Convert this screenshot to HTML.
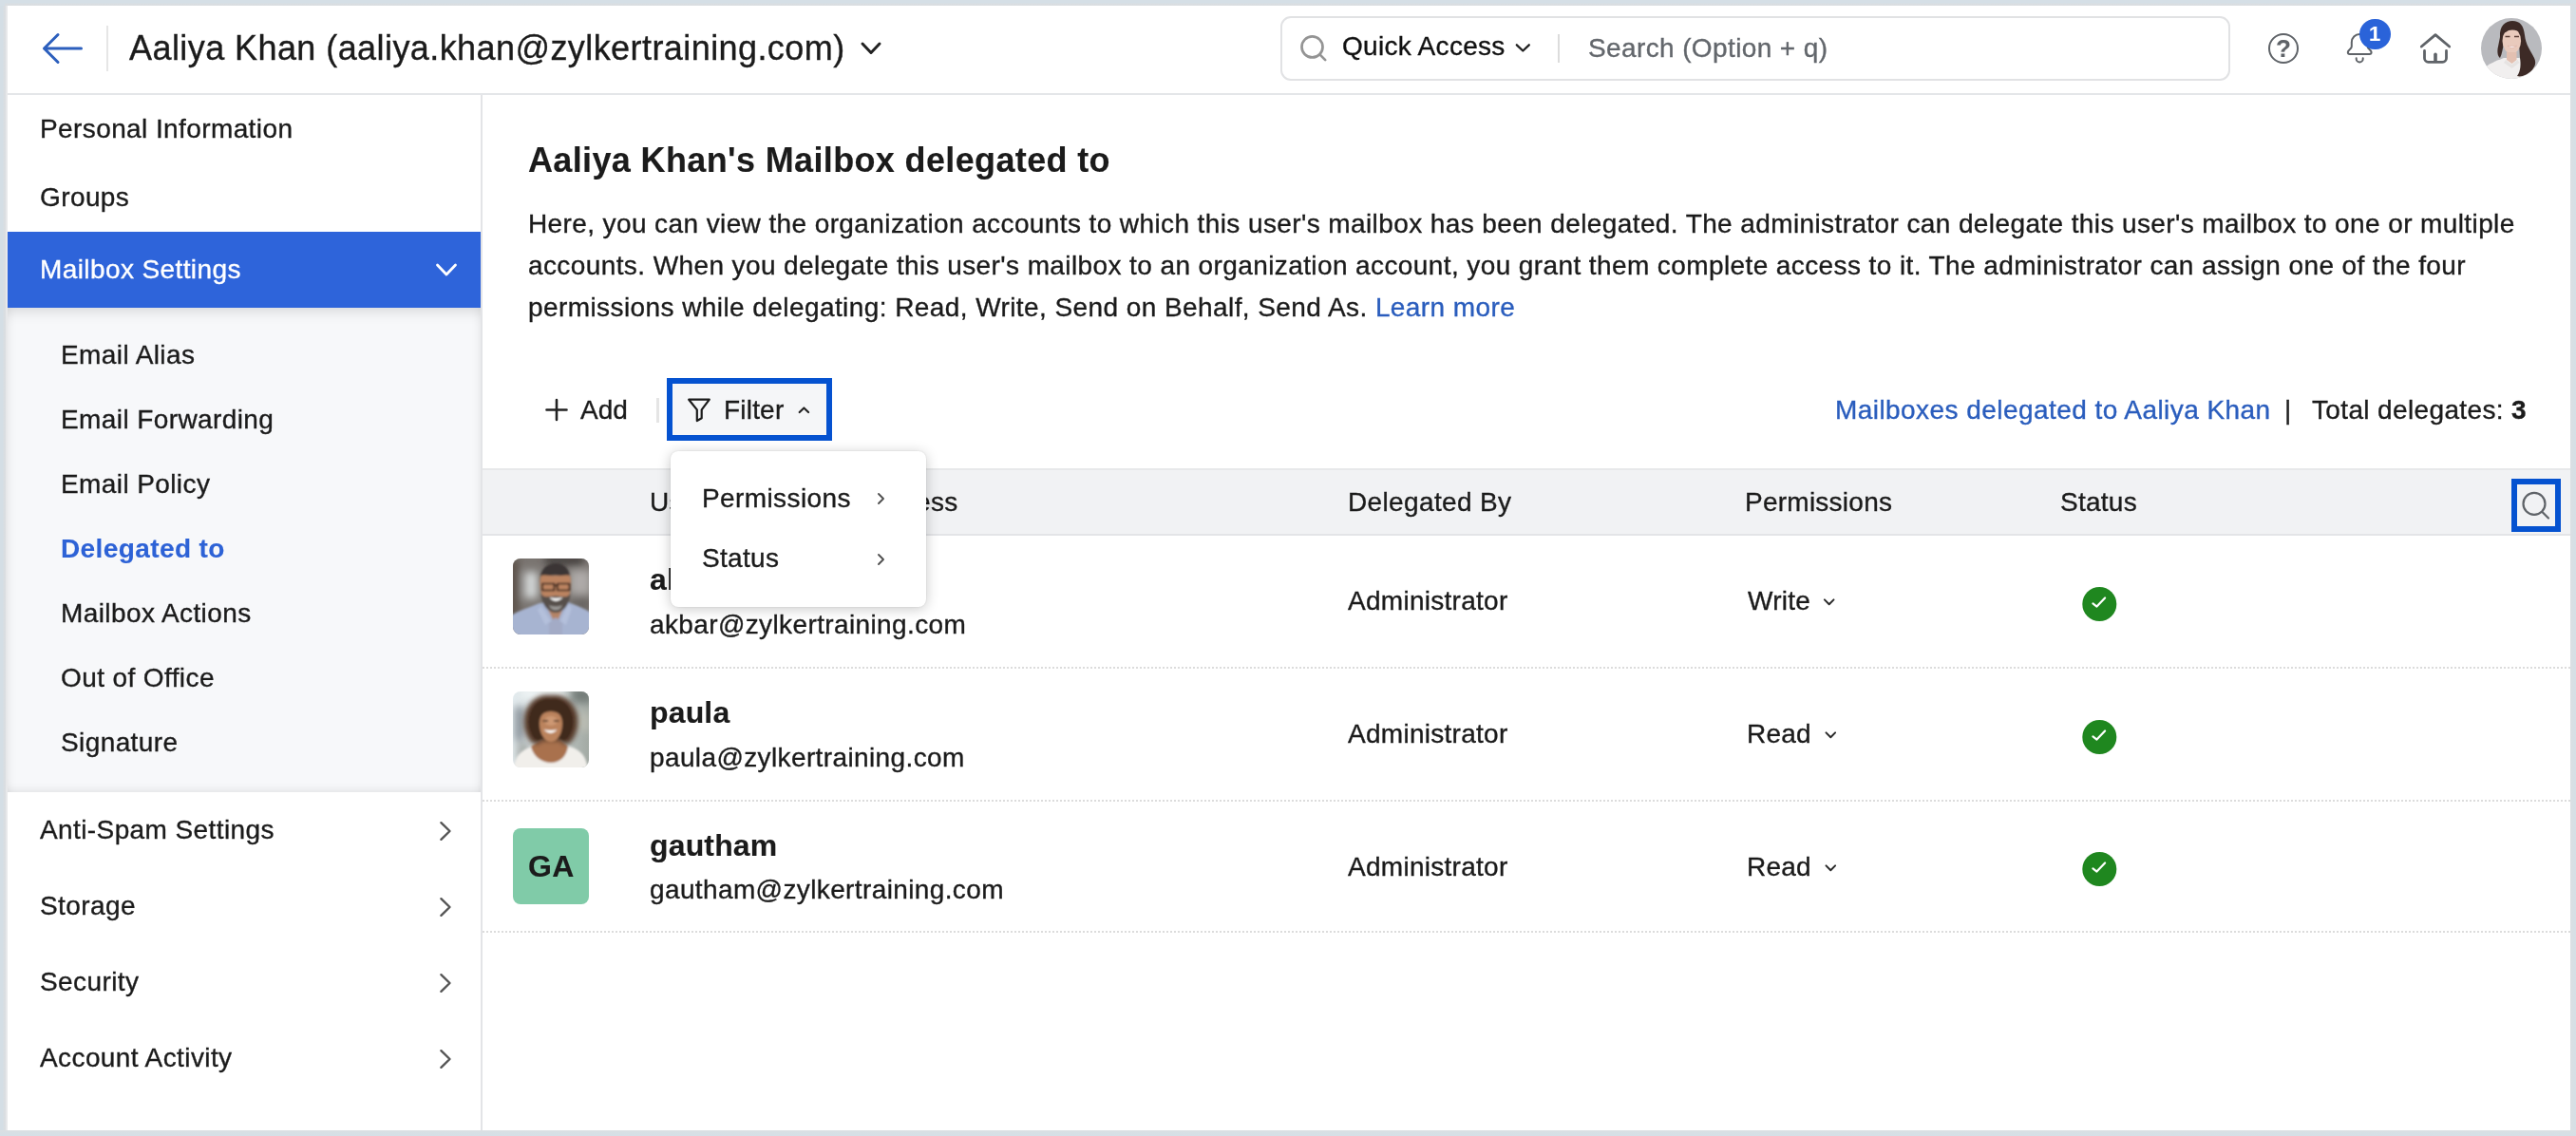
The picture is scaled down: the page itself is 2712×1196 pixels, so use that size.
<!DOCTYPE html>
<html lang="en"><head><meta charset="utf-8"><title>Mailbox delegated to</title>
<style>
html,body{margin:0;padding:0}
body{width:2712px;height:1196px;position:relative;overflow:hidden;background:#fff;font-family:"Liberation Sans",Arial,Helvetica,sans-serif;color:#1b1b1b}
.b{position:absolute;display:block;box-sizing:border-box}
.t{will-change:transform;position:absolute;white-space:nowrap;line-height:1;margin:0;padding:0;-webkit-text-stroke:0.35px currentColor}
svg{overflow:visible}

</style></head>
<body>
<div class="b" style="left:8px;top:6px;width:2698px;height:92px;background:#fff"></div>
<div class="b" style="left:8px;top:98px;width:2698px;height:2px;background:#e4e6e9"></div>
<svg class="b" style="left:40px;top:30px;" width="52" height="42" viewBox="40 30 52 42" fill="none" stroke-linecap="round" stroke-linejoin="round"><path d="M85.500 51H46.5M61 36.5L46.5 51L61 65.5" stroke="#2c5fbd" stroke-width="3"/></svg>
<div class="b" style="left:112px;top:27px;width:2px;height:48px;background:#e6e6e6"></div>
<div class="t" style="left:136.30px;top:33.00px;font-size:36px;font-weight:400;color:#1b1b1b;letter-spacing:0.425px;">Aaliya Khan (aaliya.khan@zylkertraining.com)</div>
<svg class="b" style="left:900px;top:40px;" width="34" height="24" viewBox="900 40 34 24" fill="none" stroke-linecap="round" stroke-linejoin="round"><path d="M908 46L917 55.5L926 46" stroke="#222" stroke-width="3"/></svg>
<div class="b" style="left:1348px;top:17px;width:1000px;height:68px;border:2px solid #e1e2e4;border-radius:11px;background:#fff"></div>
<svg class="b" style="left:1365px;top:35px;" width="36" height="34" viewBox="1365 35 36 34" fill="none" stroke-linecap="round" stroke-linejoin="round"><circle cx="1381.5" cy="49.4" r="11" stroke="#949494" stroke-width="2.7"/><path d="M1389.5 57.4L1395.2 63.1" stroke="#949494" stroke-width="2.7"/></svg>
<div class="t" style="left:1412.80px;top:35.00px;font-size:28px;font-weight:400;color:#111;letter-spacing:0.3px;">Quick Access</div>
<svg class="b" style="left:1592px;top:42px;" width="22" height="16" viewBox="1592 42 22 16" fill="none" stroke-linecap="round" stroke-linejoin="round"><path d="M1596.8 47.3L1603.3 53.5L1609.8 47.3" stroke="#222" stroke-width="2.3"/></svg>
<div class="b" style="left:1640px;top:36px;width:2.2px;height:30px;background:#dcdcdc"></div>
<div class="t" style="left:1671.80px;top:37.00px;font-size:28px;font-weight:400;color:#63676c;letter-spacing:0.38px;">Search (Option + q)</div>
<svg class="b" style="left:2386px;top:33px;" width="36" height="36" viewBox="2386 33 36 36" fill="none" stroke-linecap="round" stroke-linejoin="round"><circle cx="2404" cy="51" r="15" stroke="#5f6368" stroke-width="2"/></svg>
<div class="t" style="left:2396.10px;top:37.90px;font-size:26px;font-weight:700;color:#5f6368;letter-spacing:0px;-webkit-text-stroke-width:0.12px;">?</div>
<svg class="b" style="left:2466px;top:32px;" width="36" height="38" viewBox="2466 32 36 38" fill="none" stroke-linecap="round" stroke-linejoin="round"><path d="M2475.8 44.4A8.4 8.4 0 0 1 2492.6 44.4V49C2492.6 51.5 2496.6 53 2496.6 55A2 2 0 0 1 2494.6 57H2473.8A2 2 0 0 1 2471.8 55C2471.8 53 2475.8 51.5 2475.8 49Z" stroke="#5f6368" stroke-width="2"/><path d="M2480.7 61.2V61.900A3.5 3.5 0 0 0 2487.7 61.900V61.2" stroke="#5f6368" stroke-width="2"/></svg>
<div class="b" style="left:2484.2px;top:19.7px;width:32.5px;height:32.5px;background:#2a63d9;border-radius:50%"></div>
<div class="t" style="left:2494.20px;top:25.00px;font-size:22px;font-weight:700;color:#fff;letter-spacing:0px;-webkit-text-stroke-width:0.12px;">1</div>
<svg class="b" style="left:2544px;top:32px;" width="40" height="38" viewBox="2544 32 40 38" fill="none" stroke-linecap="round" stroke-linejoin="round"><path d="M2549.3 49L2564 36.6L2578.7 49" stroke="#5f6368" stroke-width="2.8"/><path d="M2552.5 53.5V61.3A4 4 0 0 0 2556.5 65.3H2571.5A4 4 0 0 0 2575.5 61.3V53.5" stroke="#5f6368" stroke-width="2.8"/><path d="M2564 57.3V64" stroke="#5f6368" stroke-width="3.6"/></svg>
<svg class="b" style="left:2612px;top:19px" width="64" height="64" viewBox="0 0 64 64">
<defs><clipPath id="cpA"><circle cx="32" cy="32" r="32"/></clipPath>
<filter id="bl1" x="-20%" y="-20%" width="140%" height="140%"><feGaussianBlur stdDeviation="0.7"/></filter>
<filter id="bl2" x="-20%" y="-20%" width="140%" height="140%"><feGaussianBlur stdDeviation="1"/></filter>
<filter id="bl3" x="-40%" y="-40%" width="180%" height="180%"><feGaussianBlur stdDeviation="4"/></filter>
<filter id="bl4" x="-40%" y="-40%" width="180%" height="180%"><feGaussianBlur stdDeviation="2.2"/></filter></defs>
<g clip-path="url(#cpA)"><rect width="64" height="64" fill="#b9babe"/>
<g filter="url(#bl1)">
<path d="M2 54C8 48 16 45 24 42L40 42C48 44 54 48 60 56V64H2Z" fill="#f1efef"/>
<path d="M20 20C19 8 26 3 33 3C41 3 45 8 46 18C47 28 52 34 56 42C59 48 56 54 50 58C46 61 41 62 38 61C42 56 42 48 41 42L40 26L24 26C23 32 22 38 20 42C17 40 17 34 18 30Z" fill="#3d2c27"/>
<ellipse cx="32.300" cy="24" rx="9.8" ry="13.5" fill="#e9cabc"/>
<path d="M27 36h10.500v8l-5 4l-5.500-4Z" fill="#e3c0b1"/>
<path d="M22 16C24 8 38 6 43 16C38 12 30 11 26 15Z" fill="#3d2c27"/>
<path d="M28 29.200Q32.500 33.500 37.500 29.200Q32.500 30.500 28 29.200Z" fill="#fff" stroke="#d8a79a" stroke-width=".5"/>
<path d="M25.500 19.500h5M35 19.500h5" stroke="#5b4038" stroke-width="1.500"/>
<path d="M26 44l6.500 5l6-5l2 3l-8 6l-8.500-6Z" fill="#e6e3e2"/>
</g></g></svg>
<div class="b" style="left:8px;top:100px;width:498px;height:1090px;background:#fff"></div>
<div class="b" style="left:506px;top:100px;width:2px;height:1090px;background:#e3e4e7"></div>
<div class="t" style="left:41.80px;top:122.00px;font-size:28px;font-weight:400;color:#1b1b1b;letter-spacing:0.4px;">Personal Information</div>
<div class="t" style="left:41.50px;top:194.00px;font-size:28px;font-weight:400;color:#1b1b1b;letter-spacing:0.4px;">Groups</div>
<div class="b" style="left:8px;top:244px;width:498px;height:80px;background:#2e64da"></div>
<div class="t" style="left:41.80px;top:270.00px;font-size:28px;font-weight:400;color:#fff;letter-spacing:0.4px;">Mailbox Settings</div>
<svg class="b" style="left:454px;top:272px;" width="32" height="24" viewBox="454 272 32 24" fill="none" stroke-linecap="round" stroke-linejoin="round"><path d="M460.5 279L470 289L479.500 279" stroke="#fff" stroke-width="2.8"/></svg>
<div class="b" style="left:8px;top:324px;width:498px;height:510px;background:#f7f8fa;box-shadow:inset 0 14px 16px -12px rgba(0,0,0,.16),inset 0 -10px 12px -10px rgba(0,0,0,.12),inset -12px 0 12px -12px rgba(0,0,0,.08),inset 12px 0 12px -12px rgba(0,0,0,.08)"></div>
<div class="t" style="left:64.00px;top:359.70px;font-size:28px;font-weight:400;color:#1b1b1b;letter-spacing:0.4px;">Email Alias</div>
<div class="t" style="left:64.00px;top:427.70px;font-size:28px;font-weight:400;color:#1b1b1b;letter-spacing:0.4px;">Email Forwarding</div>
<div class="t" style="left:64.00px;top:495.70px;font-size:28px;font-weight:400;color:#1b1b1b;letter-spacing:0.4px;">Email Policy</div>
<div class="t" style="left:63.50px;top:563.70px;font-size:28px;font-weight:700;color:#2d62d6;letter-spacing:0.4px;-webkit-text-stroke-width:0.12px;">Delegated to</div>
<div class="t" style="left:64.00px;top:631.70px;font-size:28px;font-weight:400;color:#1b1b1b;letter-spacing:0.4px;">Mailbox Actions</div>
<div class="t" style="left:64.00px;top:699.70px;font-size:28px;font-weight:400;color:#1b1b1b;letter-spacing:0.4px;">Out of Office</div>
<div class="t" style="left:64.00px;top:767.70px;font-size:28px;font-weight:400;color:#1b1b1b;letter-spacing:0.4px;">Signature</div>
<div class="t" style="left:41.80px;top:860.00px;font-size:28px;font-weight:400;color:#1b1b1b;letter-spacing:0.4px;">Anti-Spam Settings</div>
<svg class="b" style="left:458px;top:860.5px;" width="22" height="28" viewBox="458 860.5 22 28" fill="none" stroke-linecap="round" stroke-linejoin="round"><path d="M464.4 865.7L473.5 874.5L464.4 883.3" stroke="#555" stroke-width="2.4"/></svg>
<div class="t" style="left:41.80px;top:940.00px;font-size:28px;font-weight:400;color:#1b1b1b;letter-spacing:0.4px;">Storage</div>
<svg class="b" style="left:458px;top:940.5px;" width="22" height="28" viewBox="458 940.5 22 28" fill="none" stroke-linecap="round" stroke-linejoin="round"><path d="M464.4 945.7L473.5 954.5L464.4 963.3" stroke="#555" stroke-width="2.4"/></svg>
<div class="t" style="left:41.80px;top:1020.00px;font-size:28px;font-weight:400;color:#1b1b1b;letter-spacing:0.4px;">Security</div>
<svg class="b" style="left:458px;top:1020.5px;" width="22" height="28" viewBox="458 1020.5 22 28" fill="none" stroke-linecap="round" stroke-linejoin="round"><path d="M464.4 1025.7L473.5 1034.5L464.4 1043.3" stroke="#555" stroke-width="2.4"/></svg>
<div class="t" style="left:41.80px;top:1100.00px;font-size:28px;font-weight:400;color:#1b1b1b;letter-spacing:0.4px;">Account Activity</div>
<svg class="b" style="left:458px;top:1100.5px;" width="22" height="28" viewBox="458 1100.5 22 28" fill="none" stroke-linecap="round" stroke-linejoin="round"><path d="M464.4 1105.7L473.5 1114.5L464.4 1123.3" stroke="#555" stroke-width="2.4"/></svg>
<div class="b" style="left:508px;top:100px;width:2198px;height:1090px;background:#fff"></div>
<div class="t" style="left:556.30px;top:151.00px;font-size:36px;font-weight:700;color:#1b1b1b;letter-spacing:0.36px;-webkit-text-stroke-width:0.12px;">Aaliya Khan's Mailbox delegated to</div>
<div class="t" style="left:555.60px;top:222.00px;font-size:28px;font-weight:400;color:#1b1b1b;letter-spacing:0.395px;">Here, you can view the organization accounts to which this user's mailbox has been delegated. The administrator can delegate this user's mailbox to one or multiple</div>
<div class="t" style="left:555.60px;top:265.80px;font-size:28px;font-weight:400;color:#1b1b1b;letter-spacing:0.4px;">accounts. When you delegate this user's mailbox to an organization account, you grant them complete access to it. The administrator can assign one of the four</div>
<div class="t" style="left:555.60px;top:309.60px;font-size:28px;font-weight:400;color:#1b1b1b;letter-spacing:0.42px;">permissions while delegating: Read, Write, Send on Behalf, Send As. <span style="color:#2a5dbd">Learn more</span></div>
<svg class="b" style="left:572px;top:418px;" width="28" height="28" viewBox="572 418 28 28" fill="none" stroke-linecap="round" stroke-linejoin="round"><path d="M586 421V442M575.500 431.5H596.500" stroke="#222" stroke-width="2.6"/></svg>
<div class="t" style="left:611.00px;top:417.70px;font-size:28px;font-weight:400;color:#1b1b1b;letter-spacing:0px;">Add</div>
<div class="b" style="left:691px;top:418.5px;width:2.5px;height:26px;background:#e5e5e5"></div>
<div class="b" style="left:702px;top:398px;width:174px;height:66px;border:6px solid #0552d0;background:#f5f6f8"></div>
<svg class="b" style="left:720px;top:416px;" width="32" height="32" viewBox="720 416 32 32" fill="none" stroke-linecap="round" stroke-linejoin="round"><path d="M725.2 420.7H746.8L738.700 431.4V440.300L733.800 443V431.4Z" stroke="#1b1b1b" stroke-width="2.2"/></svg>
<div class="t" style="left:762.00px;top:417.80px;font-size:28px;font-weight:400;color:#1b1b1b;letter-spacing:0.2px;">Filter</div>
<svg class="b" style="left:836px;top:424px;" width="20" height="16" viewBox="836 424 20 16" fill="none" stroke-linecap="round" stroke-linejoin="round"><path d="M841.7 434L846.4 429.5L851.1 434" stroke="#222" stroke-width="2.2"/></svg>
<div class="t" style="left:1932.00px;top:417.80px;font-size:28px;font-weight:400;color:#2a5dbd;letter-spacing:0.44px;">Mailboxes delegated to Aaliya Khan</div>
<div class="t" style="left:2405.30px;top:417.80px;font-size:28px;font-weight:400;color:#222;letter-spacing:0px;">|</div>
<div class="t" style="left:2433.80px;top:417.80px;font-size:28px;font-weight:400;color:#1b1b1b;letter-spacing:0.36px;">Total delegates: <b style="letter-spacing:0">3</b></div>
<div class="b" style="left:508px;top:493px;width:2198px;height:71px;background:#f1f2f4;border-top:2px solid #e7e8ea;border-bottom:2.500px solid #e3e4e7"></div>
<div class="t" style="left:683.80px;top:515.00px;font-size:28px;font-weight:400;color:#1b1b1b;letter-spacing:0.4px;">Username/Email Address</div>
<div class="t" style="left:1418.50px;top:515.00px;font-size:28px;font-weight:400;color:#1b1b1b;letter-spacing:0.36px;">Delegated By</div>
<div class="t" style="left:1836.50px;top:515.00px;font-size:28px;font-weight:400;color:#1b1b1b;letter-spacing:0.25px;">Permissions</div>
<div class="t" style="left:2168.50px;top:515.00px;font-size:28px;font-weight:400;color:#1b1b1b;letter-spacing:0.25px;">Status</div>
<div class="b" style="left:2644px;top:504px;width:52px;height:56px;border:6px solid #0552d0;background:#f1f2f4"></div>
<svg class="b" style="left:2652px;top:514px;" width="34" height="34" viewBox="2652 514 34 34" fill="none" stroke-linecap="round" stroke-linejoin="round"><circle cx="2668" cy="530.4" r="11.5" stroke="#5f6368" stroke-width="2.2"/><path d="M2676.500 539L2683 545.5" stroke="#5f6368" stroke-width="2.2"/></svg>
<div class="t" style="left:683.60px;top:594.00px;font-size:32px;font-weight:700;color:#1b1b1b;letter-spacing:0.15px;-webkit-text-stroke-width:0.12px;">akbar</div>
<div class="t" style="left:683.60px;top:644.00px;font-size:28px;font-weight:400;color:#1b1b1b;letter-spacing:0.38px;">akbar@zylkertraining.com</div>
<div class="t" style="left:1418.70px;top:618.60px;font-size:28px;font-weight:400;color:#1b1b1b;letter-spacing:0.28px;">Administrator</div>
<div class="t" style="left:1839.80px;top:618.60px;font-size:28px;font-weight:400;color:#1b1b1b;letter-spacing:0.25px;">Write</div>
<svg class="b" style="left:1916px;top:623.6px;" width="24" height="18" viewBox="1916 623.6 24 18" fill="none" stroke-linecap="round" stroke-linejoin="round"><path d="M1920.9 631.0L1925.7 635.8000000000001L1930.5 631.0" stroke="#2a2a2a" stroke-width="2"/></svg>
<svg class="b" style="left:2190px;top:616px;" width="40" height="40" viewBox="2190 616 40 40" fill="none" stroke-linecap="round" stroke-linejoin="round"><circle cx="2210.3" cy="636" r="18" fill="#1f871f" stroke="none"/><path d="M2203.4 635.4L2207.5 638.6L2216.1 629.5" stroke="#fff" stroke-width="2.2"/></svg>
<div class="b" style="left:508px;top:702px;width:2198px;height:2px;background-image:repeating-linear-gradient(90deg,#dcdcdc 0,#dcdcdc 2px,transparent 2px,transparent 4px)"></div>
<div class="t" style="left:683.60px;top:734.00px;font-size:32px;font-weight:700;color:#1b1b1b;letter-spacing:0.15px;-webkit-text-stroke-width:0.12px;">paula</div>
<div class="t" style="left:683.60px;top:784.00px;font-size:28px;font-weight:400;color:#1b1b1b;letter-spacing:0.38px;">paula@zylkertraining.com</div>
<div class="t" style="left:1418.70px;top:758.60px;font-size:28px;font-weight:400;color:#1b1b1b;letter-spacing:0.28px;">Administrator</div>
<div class="t" style="left:1839.00px;top:758.60px;font-size:28px;font-weight:400;color:#1b1b1b;letter-spacing:0.25px;">Read</div>
<svg class="b" style="left:1916px;top:763.6px;" width="24" height="18" viewBox="1916 763.6 24 18" fill="none" stroke-linecap="round" stroke-linejoin="round"><path d="M1922.5 771.0L1927.3 775.8000000000001L1932.1 771.0" stroke="#2a2a2a" stroke-width="2"/></svg>
<svg class="b" style="left:2190px;top:755.6px;" width="40" height="40" viewBox="2190 755.6 40 40" fill="none" stroke-linecap="round" stroke-linejoin="round"><circle cx="2210.3" cy="775.6" r="18" fill="#1f871f" stroke="none"/><path d="M2203.4 775.0L2207.5 778.2L2216.1 769.1" stroke="#fff" stroke-width="2.2"/></svg>
<div class="b" style="left:508px;top:842px;width:2198px;height:2px;background-image:repeating-linear-gradient(90deg,#dcdcdc 0,#dcdcdc 2px,transparent 2px,transparent 4px)"></div>
<div class="t" style="left:683.60px;top:873.60px;font-size:32px;font-weight:700;color:#1b1b1b;letter-spacing:0.15px;-webkit-text-stroke-width:0.12px;">gautham</div>
<div class="t" style="left:683.60px;top:923.20px;font-size:28px;font-weight:400;color:#1b1b1b;letter-spacing:0.38px;">gautham@zylkertraining.com</div>
<div class="t" style="left:1418.70px;top:898.50px;font-size:28px;font-weight:400;color:#1b1b1b;letter-spacing:0.28px;">Administrator</div>
<div class="t" style="left:1839.00px;top:898.50px;font-size:28px;font-weight:400;color:#1b1b1b;letter-spacing:0.25px;">Read</div>
<svg class="b" style="left:1916px;top:903.5px;" width="24" height="18" viewBox="1916 903.5 24 18" fill="none" stroke-linecap="round" stroke-linejoin="round"><path d="M1922.5 910.9L1927.3 915.7L1932.1 910.9" stroke="#2a2a2a" stroke-width="2"/></svg>
<svg class="b" style="left:2190px;top:894.8px;" width="40" height="40" viewBox="2190 894.8 40 40" fill="none" stroke-linecap="round" stroke-linejoin="round"><circle cx="2210.3" cy="914.8" r="18" fill="#1f871f" stroke="none"/><path d="M2203.4 914.1999999999999L2207.5 917.4L2216.1 908.3" stroke="#fff" stroke-width="2.2"/></svg>
<div class="b" style="left:508px;top:980px;width:2198px;height:2px;background-image:repeating-linear-gradient(90deg,#dcdcdc 0,#dcdcdc 2px,transparent 2px,transparent 4px)"></div>
<svg class="b" style="left:540px;top:588px" width="80" height="80" viewBox="0 0 80 80">
<defs><clipPath id="cp1"><rect width="80" height="80" rx="8"/></clipPath></defs>
<g clip-path="url(#cp1)"><rect width="80" height="80" fill="#7a7571"/>
<g filter="url(#bl3)"><rect x="12" y="14" width="14" height="28" fill="#d2d5d5"/><rect x="60" y="12" width="22" height="26" fill="#aeaaa8"/><rect x="-4" y="0" width="10" height="62" fill="#5a4f47"/><rect x="34" y="-4" width="40" height="12" fill="#474341"/><rect x="62" y="40" width="20" height="14" fill="#6a6663"/></g>
<g filter="url(#bl2)">
<path d="M-2 60C6 55 16 52 28 47L58 46C68 50 76 53 82 57V82H-2Z" fill="#a7b4d1"/>
<path d="M32 44L45 70L57 44Z" fill="#b58466"/>
<path d="M38 68L45 62L52 68V82H38Z" fill="#a3abc6"/>
<path d="M30 50L40 66L34 70L26 54ZM58 48L50 66L56 70L62 52Z" fill="#b4c0db"/>
<path d="M29 26C27 10 38 5 45 5C53 5 62 10 60 27L58 22C50 16 38 16 31 22Z" fill="#3a3634"/>
<path d="M28.500 24C28.500 14 33 19 45 18C57 19 61 14 61 24C61 30 60 40 57 46L33 46C30 40 28.500 30 28.500 24Z" fill="#bb8361"/>
<path d="M29.500 36C30 50 38 57 45 57C52 57 60 50 60.500 36C58 42 55 40 45 39.500C35 40 32 42 29.500 36Z" fill="#57504c"/>
<path d="M38 49C40 56 50 56 52 49C48 51 42 51 38 49Z" fill="#9b9997"/>
<path d="M38.500 41Q45 48.500 52.500 41Q45 42.500 38.500 41Z" fill="#fff"/>
<path d="M31 26.500h12.500v7h-12.500zM47 26.500h12.500v7h-12.500zM43.500 28.500h3.500" stroke="#2a1a14" stroke-width="1.700" fill="none"/>
</g></g></svg>
<svg class="b" style="left:540px;top:728px" width="80" height="80" viewBox="0 0 80 80">
<defs><clipPath id="cp2"><rect width="80" height="80" rx="8"/></clipPath>
<linearGradient id="g2" x1="0" x2="1"><stop offset="0" stop-color="#e3ebee"/><stop offset=".4" stop-color="#ccd4d4"/><stop offset="1" stop-color="#a3aaa4"/></linearGradient></defs>
<g clip-path="url(#cp2)"><rect width="80" height="80" fill="url(#g2)"/>
<g filter="url(#bl3)"><rect x="2" y="16" width="10" height="36" fill="#868f96"/><rect x="62" y="-4" width="22" height="16" fill="#737c78"/><rect x="8" y="-4" width="46" height="12" fill="#f0f5f6"/><rect x="4" y="54" width="14" height="20" fill="#a9aeab"/><rect x="66" y="22" width="16" height="20" fill="#b9bcb2"/></g>
<g filter="url(#bl2)">
<path d="M1 82C2 68 8 62 20 58L60 58C72 62 77 68 79 82Z" fill="#f1efeb"/>
<path d="M19 58C22 70 32 75 40 75C48 75 56 70 58 58L48 50H32Z" fill="#a9714e"/>
<g filter="url(#bl4)"><path d="M40 4C52 2 63 10 67 22C70 32 68 44 62 52C58 57 52 56 50 52L30 52C28 56 22 57 18 52C12 44 10 32 13 22C17 10 28 2 40 4Z" fill="#563a2c"/></g><path d="M40 8C50 6 59 13 62 23C65 32 63 42 58 49C55 52 52 52 50 50L30 50C28 52 25 52 22 49C17 42 15 32 18 23C21 13 30 6 40 8Z" fill="#41291e"/>
<path d="M28 34C28 24 33 21 40 21C47 21 52 24 52 34C52 44 47 53 40 53C33 53 28 44 28 34Z" fill="#bb835d"/>
<ellipse cx="40" cy="31" rx="7" ry="5" fill="#cd9873"/>
<path d="M32.500 40Q40 47.500 46.500 40Q40 42 32.500 40Z" fill="#fff"/>
<path d="M31.500 31h5.500M43 31h5.500" stroke="#3f281d" stroke-width="1.600"/>
</g></g></svg>
<div class="b" style="left:540px;top:872px;width:80px;height:80px;background:#80cba8;border-radius:8px"></div>
<div class="t" style="left:555.60px;top:896.00px;font-size:32px;font-weight:700;color:#1b1b1b;letter-spacing:0.3px;-webkit-text-stroke-width:0.12px;">GA</div>
<div class="b" style="left:706px;top:475px;width:269px;height:164px;background:#fff;border-radius:8px;box-shadow:0 2px 14px rgba(0,0,0,.22),0 0 2px rgba(0,0,0,.12)"></div>
<div class="t" style="left:739.00px;top:510.70px;font-size:28px;font-weight:400;color:#1b1b1b;letter-spacing:0.4px;">Permissions</div>
<div class="t" style="left:739.30px;top:574.20px;font-size:28px;font-weight:400;color:#1b1b1b;letter-spacing:0.3px;">Status</div>
<svg class="b" style="left:918px;top:514.8px;" width="18" height="20" viewBox="918 514.8 18 20" fill="none" stroke-linecap="round" stroke-linejoin="round"><path d="M925 519.8L930 524.8L925 529.8" stroke="#505050" stroke-width="1.9"/></svg>
<svg class="b" style="left:918px;top:579.1px;" width="18" height="20" viewBox="918 579.1 18 20" fill="none" stroke-linecap="round" stroke-linejoin="round"><path d="M925 584.1L930 589.1L925 594.1" stroke="#505050" stroke-width="1.9"/></svg>
<div class="b" style="left:0px;top:0px;width:8px;height:1196px;background:linear-gradient(90deg,#d4dee5 0,#d4dee5 38%,#d9dee2 48%,#dadde0 68%,#e6e8ea 76%,#e8e9eb 100%)"></div>
<div class="b" style="left:2706px;top:0px;width:6px;height:1196px;background:linear-gradient(90deg,#dcdfe3 0,#d8dfe4 35%,#d5dfe6 100%)"></div>
<div class="b" style="left:5px;top:0px;width:2707px;height:6px;background:linear-gradient(#d5dfe6 0,#d5dfe6 55%,#d9dee2 62%,#dadde0 90%,#e2e4e6 100%)"></div>
<div class="b" style="left:0px;top:0px;width:5px;height:6px;background:#d5dfe6"></div>
<div class="b" style="left:0px;top:1190px;width:2712px;height:6px;background:linear-gradient(#dcdfe2 0,#d8dfe4 35%,#d5dfe6 100%)"></div>
</body></html>
